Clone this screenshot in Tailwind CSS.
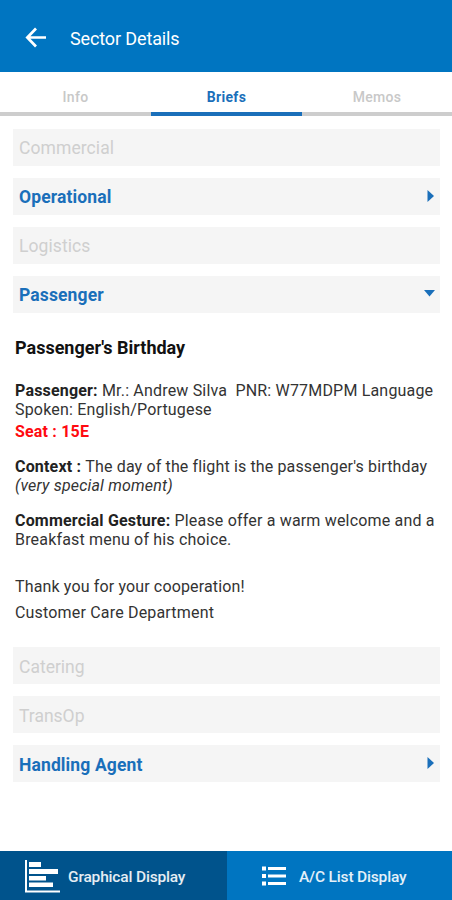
<!DOCTYPE html>
<html lang="en">
<head>
<meta charset="utf-8">
<meta name="viewport" content="width=device-width, initial-scale=1">
<title>Sector Details</title>
<script src="https://cdn.jsdelivr.net/npm/@tailwindcss/browser@4"></script>
</head>
<body class="bg-white font-['Roboto',sans-serif]">
<div class="flex h-[900px] w-[452px] flex-col overflow-hidden whitespace-nowrap bg-white">
  <header class="flex h-[72px] shrink-0 items-center bg-[#0075c1] pt-1 text-white">
    <svg class="-mt-[2px] ml-[25px] h-[21px] w-[22px]" viewBox="0 0 22 21" fill="none" stroke="currentColor" stroke-width="2.7"><path d="M21 10.5H3M11 1.500L2.3 10.500L11 19.500"/></svg>
    <h1 class="ml-[23px] pt-px text-[18px] leading-6 tracking-[-0.13px]">Sector Details</h1>
  </header>
  <nav class="grid h-[44px] shrink-0 grid-cols-[151px_151px_150px] text-center text-[14px] font-medium leading-[20px] tracking-[0.3px] text-[#c8c8c8]">
    <a class="border-b-4 border-[#cdcdcd] pt-[15px]">Info</a>
    <a class="border-b-4 border-[#1a6fba] pt-[15px] font-bold text-[#1a6fba]">Briefs</a>
    <a class="border-b-4 border-[#cdcdcd] pt-[15px]">Memos</a>
  </nav>
  <main class="flex-1 pl-[13px] pr-3 pt-[13px]">
    <div class="flex flex-col gap-3 text-[17.5px] text-[#cfcfcf]">
      <div class="flex h-[37px] items-center bg-[#f5f5f5] pl-[6px]"><span class="pt-[2px] tracking-[0.08px]">Commercial</span></div>
      <div class="flex h-[37px] items-center justify-between bg-[#f5f5f5] pl-[6px] pr-[6px] font-bold text-[#1a6fba]"><span class="pt-[2px] tracking-[0.12px]">Operational</span><svg class="-mt-[1px] h-[12px] w-[7px]" viewBox="0 0 7 12" fill="currentColor"><path d="M0.5 0L7 6L0.5 12Z"/></svg></div>
      <div class="flex h-[37px] items-center bg-[#f5f5f5] pl-[6px]"><span class="pt-[2px] tracking-[0.08px]">Logistics</span></div>
      <div class="flex h-[37px] items-center justify-between bg-[#f5f5f5] pl-[6px] pr-[5px] font-bold text-[#1a6fba]"><span class="pt-[2px] tracking-[0.12px]">Passenger</span><svg class="-mt-[2px] h-[7px] w-[11px]" viewBox="0 0 11 7" fill="currentColor"><path d="M0 0H11L5.5 6.5Z"/></svg></div>
    </div>
    <article class="h-[334px] pl-[2px] pt-[23px] text-[16px] leading-[19px] tracking-[0.18px] text-[#333]">
      <h2 class="text-[18px] font-bold leading-6 tracking-normal text-[#111]">Passenger's Birthday</h2>
      <p class="mt-[21px]"><b class="text-[#222]">Passenger:</b> Mr.: Andrew Silva&nbsp; PNR: W77MDPM Language<br>Spoken: English/Portugese</p>
      <p class="mt-[3px] font-bold text-[#ff0a10]">Seat : 15E</p>
      <p class="mt-4"><b class="text-[#222]">Context :</b> <span class="tracking-[0.14px]">The day of the flight is the passenger's birthday</span><br><i>(very special moment)</i></p>
      <p class="mt-4"><b class="text-[#222]">Commercial Gesture:</b> Please offer a warm welcome and a<br>Breakfast menu of his choice.</p>
      <p class="mt-[28px] tracking-[0.14px]">Thank you for your cooperation!</p>
      <p class="mt-[7px]">Customer Care Department</p>
    </article>
    <div class="flex flex-col gap-3 text-[17.5px] text-[#cfcfcf]">
      <div class="flex h-[37px] items-center bg-[#f5f5f5] pl-[6px]"><span class="pt-[3px]">Catering</span></div>
      <div class="flex h-[37px] items-center bg-[#f5f5f5] pl-[6px]"><span class="pt-[3px]">TransOp</span></div>
      <div class="flex h-[37px] items-center justify-between bg-[#f5f5f5] pl-[6px] pr-[6px] font-bold text-[#1a6fba]"><span class="pt-[3px] tracking-[0.12px]">Handling Agent</span><svg class="-mt-[1px] h-[12px] w-[7px]" viewBox="0 0 7 12" fill="currentColor"><path d="M0.5 0L7 6L0.5 12Z"/></svg></div>
    </div>
  </main>
  <footer class="flex h-[49px] shrink-0 text-[15.5px] font-medium tracking-[-0.17px] text-white/90">
    <button class="flex w-[227px] items-center bg-[#00538c] pl-[25px] pt-[2px]">
      <svg class="h-[33px] w-[35px] text-white" viewBox="0 0 35 33" fill="currentColor"><path d="M0 0H2V30.5H35V32.5H0ZM4 2H16V7H4ZM4 9H33V14H4ZM4 16H21V20.500H4ZM4 22.500H28V27H4Z"/></svg>
      <span class="ml-[8px] pt-[2px]">Graphical Display</span>
    </button>
    <button class="flex flex-1 items-center bg-[#0075c1] pl-[35px]">
      <svg class="h-5 w-6 text-white" viewBox="0 0 24 20" fill="currentColor"><path d="M0 .5H4V4.500H0ZM6 1H24V4H6ZM0 8H4V12H0ZM6 8.500H24V11.500H6ZM0 15.500H4V19.500H0ZM6 16H24V19H6Z"/></svg>
      <span class="ml-[13px] pt-[4px]">A/C List Display</span>
    </button>
  </footer>
</div>
</body>
</html>
